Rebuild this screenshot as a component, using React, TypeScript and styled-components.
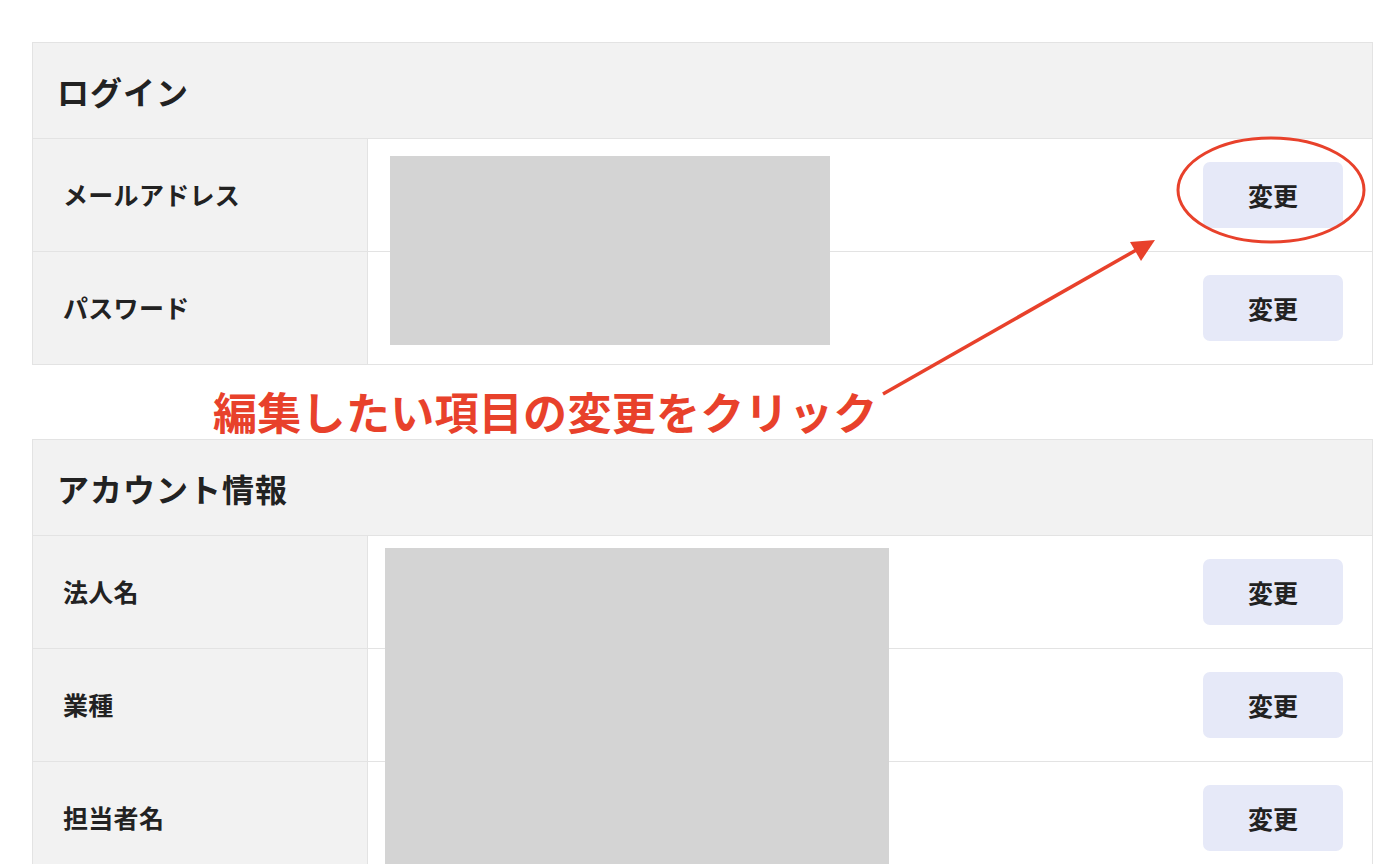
import React from "react";
import styled, { createGlobalStyle } from "styled-components";

const Global = createGlobalStyle`
  html, body {
    margin: 0;
    padding: 0;
    background: #ffffff;
  }
  body {
    font-family: "Noto Sans CJK JP", "Noto Sans", sans-serif;
    color: #222222;
    overflow: hidden;
  }
`;

// Basic
const Page = styled.div`
  position: relative;
  width: 1396px;
  height: 864px;
  padding: 42px 23px 0 32px;
  box-sizing: border-box;
  overflow: hidden;
`;
const Card = styled.section`
  position: relative;
  border: 1px solid #e3e3e3;
  background: #ffffff;
`;
const CardHeader = styled.h2`
  margin: 0;
  height: 95px;
  display: flex;
  align-items: center;
  padding-left: 24px;
  background: #f2f2f2;
  border-bottom: 1px solid #e3e3e3;
  font-size: 32px;
  font-weight: 700;
  letter-spacing: 1px;
  color: #222222;
`;
const Row = styled.div`
  display: flex;
  height: 112px;
  & + & {
    border-top: 1px solid #e3e3e3;
  }
`;
const Label = styled.div`
  width: 304px;
  flex: none;
  display: flex;
  align-items: center;
  padding: 0 0 2px 30px;
  background: #f2f2f2;
  border-right: 1px solid #e3e3e3;
  font-size: 25px;
  font-weight: 600;
  letter-spacing: 0.3px;
  color: #222222;
`;
const Value = styled.div`
  flex: 1;
  display: flex;
  align-items: center;
  justify-content: flex-end;
  padding-right: 29px;
`;
const ChangeButton = styled.button`
  width: 140px;
  height: 66px;
  border: none;
  border-radius: 7px;
  background: #e6e9f8;
  font-family: inherit;
  font-size: 25px;
  font-weight: 600;
  color: #222222;
  padding-bottom: 2px;
  cursor: pointer;
`;
// covers the hidden values
const Redaction = styled.div<{ $left: number; $top: number; $w: number; $h: number }>`
  position: absolute;
  left: ${(p) => p.$left}px;
  top: ${(p) => p.$top}px;
  width: ${(p) => p.$w}px;
  height: ${(p) => p.$h}px;
  background: #d4d4d4;
`;
const Note = styled.p`
  margin: 18px 0 0;
  height: 56px;
  line-height: 56px;
  padding-left: 181px;
  font-size: 44px;
  font-weight: 700;
  letter-spacing: 0.3px;
  color: #e8412b;
  white-space: nowrap;
`;
const Markup = styled.svg`
  position: absolute;
  left: 0;
  top: 0;
  pointer-events: none;
`;

type Item = { label: string };

const Section = ({
  title,
  items,
  cover,
}: {
  title: string;
  items: Item[];
  cover: { left: number; top: number; w: number; h: number };
}) => (
  <Card>
    <CardHeader>{title}</CardHeader>
    {items.map((it) => (
      <Row key={it.label}>
        <Label>{it.label}</Label>
        <Value>
          <ChangeButton>変更</ChangeButton>
        </Value>
      </Row>
    ))}
    <Redaction $left={cover.left} $top={cover.top} $w={cover.w} $h={cover.h} />
  </Card>
);

const App = () => {
  return (
    <Page>
      <Global />
      <Section
        title="ログイン"
        items={[{ label: "メールアドレス" }, { label: "パスワード" }]}
        cover={{ left: 357, top: 113, w: 440, h: 189 }}
      />
      <Note>編集したい項目の変更をクリック</Note>
      <Section
        title="アカウント情報"
        items={[{ label: "法人名" }, { label: "業種" }, { label: "担当者名" }]}
        cover={{ left: 352, top: 108, w: 504, h: 340 }}
      />
      <Markup width="1396" height="864" viewBox="0 0 1396 864">
        <ellipse
          cx="1271"
          cy="190"
          rx="93"
          ry="52"
          fill="none"
          stroke="#e8412b"
          strokeWidth="3"
        />
        <line
          x1="883"
          y1="394"
          x2="1138"
          y2="249"
          stroke="#e8412b"
          strokeWidth="3.5"
        />
        <polygon points="1155,240 1130,242 1141,261" fill="#e8412b" />
      </Markup>
    </Page>
  );
};

export default App;
